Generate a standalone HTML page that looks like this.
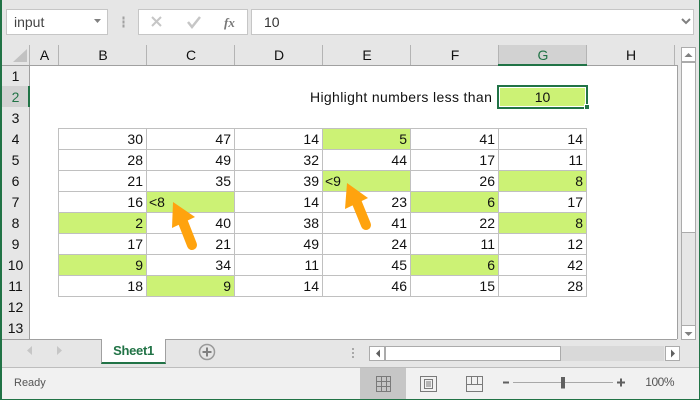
<!DOCTYPE html>
<html><head><meta charset="utf-8">
<style>
html,body{margin:0;padding:0;background:#E6E6E6}
#p{position:relative;width:700px;height:400px;overflow:hidden;background:#E6E6E6;font-family:"Liberation Sans",sans-serif;font-size:14px;color:#111}
.a{position:absolute;box-sizing:border-box}
.h{position:absolute;top:45px;height:20px;line-height:21px;text-align:center;font-size:14px;color:#111}
.r{position:absolute;left:2px;width:27px;height:21px;line-height:21px;text-align:center;font-size:14px;color:#111}
table{position:absolute;left:58px;top:128px;border-collapse:collapse;table-layout:fixed;width:529px}
td{width:88px;height:20px;padding:0 3px 0 2px;border:1px solid #C0C0C0;text-align:right;font-size:14px;line-height:20px;box-sizing:border-box;color:#111}
td.g{background:#CCF275}
td.l{text-align:left}
tr{height:21px}
.box{position:absolute;background:#fff;border:1px solid #C6C6C6;box-sizing:border-box}
.sep{position:absolute;top:45px;width:1px;height:20px;background:#B4B4B4}
</style></head><body>
<div id="p">
<div class="a" style="left:0;top:0;width:2px;height:400px;background:#217346"></div>
<div class="a" style="right:0;top:0;width:1px;height:400px;background:#217346"></div>

<div class="box" style="left:6px;top:9px;width:102px;height:26px;line-height:24px;padding-left:7px;color:#444;font-size:14px">input</div>
<svg class="a" style="left:0;top:0" width="700" height="45">
<path d="M94 19h7l-3.500 4z" fill="#808080"/>
<path d="M123 17h1v2h-1zM123 21h1v2h-1zM123 25h1v2h-1z" fill="#A0A0A0" stroke="#A0A0A0"/>
</svg>
<div class="box" style="left:138px;top:9px;width:110px;height:26px"></div>
<svg class="a" style="left:138px;top:9px" width="110" height="26">
<path d="M14 8l9 9M23 8l-9 9" stroke="#C6C6C6" stroke-width="2" fill="none"/>
<path d="M50 13l4 5 8-10" stroke="#C6C6C6" stroke-width="2.500" fill="none"/>
<text x="86" y="18" font-family="Liberation Serif" font-style="italic" font-weight="bold" font-size="13" fill="#777">fx</text>
</svg>
<div class="box" style="left:251px;top:9px;width:443px;height:26px;line-height:24px;padding-left:12px;color:#333;font-size:14px">10</div>
<svg class="a" style="left:680px;top:15px" width="12" height="12"><path d="M2 4l4 4 4-4" stroke="#808080" stroke-width="2" fill="none"/></svg>

<!-- Column headers -->
<svg class="a" style="left:13px;top:49px" width="14" height="14"><path d="M14 0V13H0z" fill="#C2C2C2"/></svg>
<div class="a" style="left:498px;top:45px;width:89px;height:19px;background:#D2D2D2"></div>
<div class="h" style="left:30px;width:29px">A</div>
<div class="h" style="left:59px;width:88px">B</div>
<div class="h" style="left:147px;width:88px">C</div>
<div class="h" style="left:235px;width:88px">D</div>
<div class="h" style="left:323px;width:88px">E</div>
<div class="h" style="left:411px;width:88px">F</div>
<div class="h" style="left:499px;width:88px;color:#217346">G</div>
<div class="h" style="left:587px;width:88px">H</div>
<div class="sep" style="left:29px"></div><div class="sep" style="left:58px"></div><div class="sep" style="left:146px"></div><div class="sep" style="left:234px"></div><div class="sep" style="left:322px"></div><div class="sep" style="left:410px"></div><div class="sep" style="left:498px"></div><div class="sep" style="left:586px"></div><div class="sep" style="left:674px"></div>
<div class="a" style="left:2px;top:65px;width:676px;height:1px;background:#A0A0A0"></div>
<div class="a" style="left:498px;top:64px;width:89px;height:2px;background:#217346"></div>

<!-- Sheet -->
<div class="a" style="left:30px;top:66px;width:647px;height:273px;background:#fff"></div>
<div class="a" style="left:677px;top:65px;width:1px;height:274px;background:#A0A0A0"></div>
<div class="a" style="left:29px;top:65px;width:1px;height:274px;background:#A0A0A0"></div>

<!-- Row headers -->
<div class="a" style="left:2px;top:86px;width:27px;height:21px;background:#D2D2D2"></div>
<div class="a" style="left:28px;top:86px;width:2px;height:21px;background:#217346"></div>
<div class="r" style="top:66px">1</div>
<div class="r" style="top:87px;color:#217346">2</div>
<div class="r" style="top:108px">3</div>
<div class="r" style="top:129px">4</div>
<div class="r" style="top:150px">5</div>
<div class="r" style="top:171px">6</div>
<div class="r" style="top:192px">7</div>
<div class="r" style="top:213px">8</div>
<div class="r" style="top:234px">9</div>
<div class="r" style="top:255px">10</div>
<div class="r" style="top:276px">11</div>
<div class="r" style="top:297px">12</div>
<div class="r" style="top:318px">13</div>

<div class="a" style="left:310px;top:87px;width:186px;height:21px;line-height:21px;font-size:14px;white-space:nowrap;letter-spacing:0.350px">Highlight numbers less than</div>
<div class="a" style="left:497px;top:85px;width:91px;height:24px;border:2px solid #217346;background:#CCF275;outline:1px solid #fff;outline-offset:-3px;text-align:center;line-height:20px;font-size:14px">10</div>
<div class="a" style="left:584px;top:104px;background:#217346;border:1px solid #fff;box-sizing:content-box;width:4px;height:4px"></div>

<table>
<tr><td>30</td><td>47</td><td>14</td><td class="g">5</td><td>41</td><td>14</td></tr>
<tr><td>28</td><td>49</td><td>32</td><td>44</td><td>17</td><td>11</td></tr>
<tr><td>21</td><td>35</td><td>39</td><td class="g l">&lt;9</td><td>26</td><td class="g">8</td></tr>
<tr><td>16</td><td class="g l">&lt;8</td><td>14</td><td>23</td><td class="g">6</td><td>17</td></tr>
<tr><td class="g">2</td><td>40</td><td>38</td><td>41</td><td>22</td><td class="g">8</td></tr>
<tr><td>17</td><td>21</td><td>49</td><td>24</td><td>11</td><td>12</td></tr>
<tr><td class="g">9</td><td>34</td><td>11</td><td>45</td><td class="g">6</td><td>42</td></tr>
<tr><td>18</td><td class="g">9</td><td>14</td><td>46</td><td>15</td><td>28</td></tr>
</table>

<svg class="a" style="left:0;top:0" width="700" height="400">
<path d="M173 202L172 228L195 217z" fill="#FFA30E"/>
<path d="M181 217L192 245" stroke="#FFA30E" stroke-width="10" stroke-linecap="round" fill="none"/>
<path d="M347 183L345 209L368 198z" fill="#FFA30E"/>
<path d="M355 198L366 225" stroke="#FFA30E" stroke-width="10" stroke-linecap="round" fill="none"/>
</svg>

<!-- Vertical scrollbar -->
<div class="a" style="left:681px;top:47px;width:15px;height:293px;background:#fff;border:1px solid #ABABAB"></div>
<div class="a" style="left:681px;top:47px;width:15px;height:16px;background:#fff;border:1px solid #ABABAB;border-bottom-width:2px"></div>
<div class="a" style="left:681px;top:325px;width:15px;height:15px;background:#fff;border:1px solid #ABABAB"></div>
<div class="a" style="left:682px;top:232px;width:13px;height:93px;background:#E6E6E6;border-top:1px solid #ABABAB"></div>
<svg class="a" style="left:681px;top:47px" width="15" height="293">
<path d="M3.500 10h8l-4-4z" fill="#808080"/><path d="M3.500 285h8l-4 4z" fill="#808080"/>
</svg>

<!-- Tab bar -->
<div class="a" style="left:2px;top:339px;width:675px;height:1px;background:#A0A0A0"></div>
<div class="a" style="left:101px;top:339px;width:65px;height:25px;background:#fff;border-left:1px solid #A0A0A0;border-right:1px solid #A0A0A0;border-bottom:2px solid #217346;text-align:center;line-height:24px;font-size:13px;font-weight:bold;color:#217346;letter-spacing:-0.300px">Sheet1</div>
<svg class="a" style="left:0;top:340px" width="240" height="26">
<path d="M32 6v9l-5-4.500z" fill="#C6C6C6"/><path d="M57 6v9l5-4.500z" fill="#C6C6C6"/>
<circle cx="207" cy="12" r="7.500" fill="none" stroke="#9A9A9A" stroke-width="1.500"/>
<path d="M207 7.500v9M202.500 12h9" stroke="#808080" stroke-width="2"/>
</svg>
<svg class="a" style="left:350px;top:340px" width="10" height="26"><path d="M2 8h2v2h-2zM2 12h2v2h-2zM2 16h2v2h-2z" fill="#A8A8A8"/></svg>

<!-- Horizontal scrollbar -->
<div class="a" style="left:385px;top:346px;width:279px;height:15px;background:#D9D9D9"></div>
<div class="a" style="left:369px;top:346px;width:16px;height:15px;background:#fff;border:1px solid #ABABAB"></div>
<div class="a" style="left:384px;top:346px;width:177px;height:15px;background:#fff;border:1px solid #ABABAB;border-left-width:2px"></div>
<div class="a" style="left:665px;top:346px;width:15px;height:15px;background:#fff;border:1px solid #ABABAB"></div>
<svg class="a" style="left:369px;top:346px" width="312" height="15">
<path d="M11 3.500v8l-4-4z" fill="#606060"/><path d="M302 3.500v8l4-4z" fill="#606060"/>
</svg>

<!-- Status bar -->
<div class="a" style="left:2px;top:367px;width:697px;height:32px;background:#F1F1F1;border-top:1px solid #BDBDBD"></div>
<div class="a" style="left:0;top:399px;width:700px;height:1px;background:#217346"></div>
<div class="a" style="left:14px;top:368px;height:30px;line-height:30px;font-size:11px;color:#555">Ready</div>
<div class="a" style="left:360px;top:368px;width:46px;height:31px;background:#C6C6C6"></div>
<svg class="a" style="left:350px;top:368px" width="350" height="31" fill="none">
<g stroke="#7A7A7A" stroke-width="1">
<path d="M26.500 8.500h14v15h-14zM26.500 13.500h14M26.500 18.500h14M31.500 8.500v15M36.500 8.500v15"/>
<path d="M70.500 8.500h16v15h-16z"/><path d="M74.500 11.500h8v9h-8zM76 14h5M76 16h5M76 18h5"/>
<path d="M116.500 8.500h16v15h-16zM116.500 16.500h16M121.500 8.500v8M127.500 8.500v8"/>
</g>
<path d="M153 13.500h6v2h-6z" fill="#606060"/>
<path d="M163 14.500h100" stroke="#A8A8A8"/>
<path d="M211 9h4v11.500h-4z" fill="#606060"/>
<path d="M267 13.500h8v2h-8zM270 10.500h2v8h-2z" fill="#606060"/>
</svg>
<div class="a" style="left:640px;top:368px;width:34px;height:29px;line-height:29px;font-size:12px;text-align:right;color:#555;white-space:nowrap;letter-spacing:-0.500px">100%</div>
</div>
</body></html>
